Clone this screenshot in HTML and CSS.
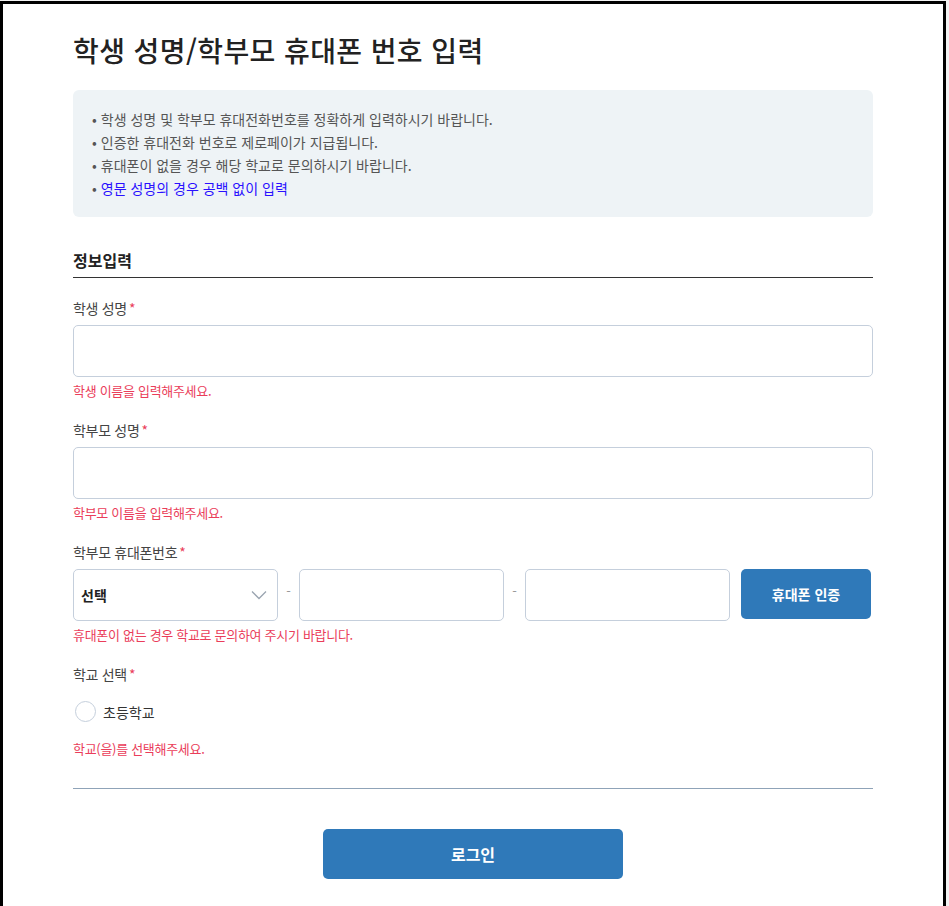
FILE: index.html
```html
<!DOCTYPE html>
<html lang="ko">
<head>
<meta charset="utf-8">
<title>학생 성명/학부모 휴대폰 번호 입력</title>
<link rel="stylesheet" href="styles.css">
</head>
<body>
<div class="frame">
  <div class="content">
    <h1 class="title">학생 성명/학부모 휴대폰 번호 입력</h1>
    <ul class="notice">
      <li>학생 성명 및 학부모 휴대전화번호를 정확하게 입력하시기 바랍니다.</li>
      <li>인증한 휴대전화 번호로 제로페이가 지급됩니다.</li>
      <li>휴대폰이 없을 경우 해당 학교로 문의하시기 바랍니다.</li>
      <li class="blue">영문 성명의 경우 공백 없이 입력</li>
    </ul>
    <h2 class="section">정보입력</h2>

    <div class="field">
      <label class="label">학생 성명<span class="req">*</span></label>
      <input class="input" type="text">
      <p class="error">학생 이름을 입력해주세요.</p>
    </div>

    <div class="field">
      <label class="label">학부모 성명<span class="req">*</span></label>
      <input class="input" type="text">
      <p class="error">학부모 이름을 입력해주세요.</p>
    </div>

    <div class="field">
      <label class="label">학부모 휴대폰번호<span class="req">*</span></label>
      <div class="phone-row">
        <div class="select">
          <span>선택</span>
          <svg width="16" height="10" viewBox="0 0 16 10"><path d="M1 1.5 L8 8.5 L15 1.5" fill="none" stroke="#9aa4b0" stroke-width="1.3"/></svg>
        </div>
        <span class="dash">-</span>
        <input class="input phone" type="text">
        <span class="dash">-</span>
        <input class="input phone" type="text">
        <button class="btn-auth" type="button">휴대폰 인증</button>
      </div>
      <p class="error">휴대폰이 없는 경우 학교로 문의하여 주시기 바랍니다.</p>
    </div>

    <div class="field">
      <label class="label">학교 선택<span class="req">*</span></label>
      <div class="radio-row">
        <span class="radio"></span>
        <span class="radio-text">초등학교</span>
      </div>
      <p class="error school">학교(을)를 선택해주세요.</p>
    </div>

    <hr class="divider">
    <div class="actions">
      <button class="btn-login" type="button">로그인</button>
    </div>
  </div>
</div>
</body>
</html>
```

FILE: styles.css
```css
* { box-sizing: border-box; }
html, body { margin: 0; padding: 0; background: #f2f2f2; }
body {
  font-family: "Noto Sans CJK KR", "Noto Sans", sans-serif;
  color: #333;
  padding-top: 1px;
}
.frame {
  width: 946px;
  height: 905px;
  background: #fff;
  border: 3px solid #000;
  border-bottom: none;
  overflow: hidden;
}
.content {
  width: 800px;
  margin: 0 auto;
  padding-top: 26px;
}
.title {
  margin: 0;
  font-size: 28px;
  font-weight: 500;
  color: #222;
  line-height: 40px;
  letter-spacing: 0.4px;
}
.notice {
  list-style: none;
  margin: 20px 0 0;
  padding: 18px 19px 14px 19px;
  background: #eef3f6;
  border-radius: 6px;
  height: 127px;
}
.notice li {
  font-size: 14px;
  line-height: 23px;
  color: #555;
  letter-spacing: 0;
}
.notice li::before {
  content: "•";
  margin-right: 4px;
  color: #555;
}
.notice li.blue { color: #2a10ff; }
.section {
  margin: 31px 0 0;
  font-size: 16px;
  font-weight: 700;
  color: #222;
  line-height: 24px;
  padding-bottom: 5px;
  border-bottom: 1px solid #333;
}
.field { margin-top: 20px; }
.label {
  display: block;
  font-size: 14px;
  color: #444;
  line-height: 20px;
  letter-spacing: -0.3px;
}
.req { color: #ea3d5a; margin-left: 2px; }
.input {
  display: block;
  width: 100%;
  height: 52px;
  margin-top: 7px;
  border: 1px solid #c5cfdc;
  border-radius: 5px;
  background: #fff;
  font-family: inherit;
  font-size: 14px;
  padding: 0 12px;
}
.error {
  margin: 5px 0 0;
  font-size: 13px;
  line-height: 18px;
  color: #ea3d5a;
  letter-spacing: -0.3px;
}
.phone-row {
  display: flex;
  align-items: flex-start;
  margin-top: 7px;
  height: 52px;
}
.select {
  width: 205px;
  height: 52px;
  border: 1px solid #c5cfdc;
  border-radius: 5px;
  display: flex;
  align-items: center;
  justify-content: space-between;
  padding: 0 10px 0 7px;
  font-size: 14px;
  font-weight: 700;
  color: #222;
}
.dash {
  width: 21px;
  text-align: center;
  color: #999;
  font-size: 13px;
  line-height: 44px;
}
.input.phone {
  width: 205px;
  margin-top: 0;
}
.btn-auth {
  margin-left: 11px;
  width: 130px;
  height: 50px;
  border: none;
  border-radius: 5px;
  background: #2f79b9;
  color: #fff;
  font-family: inherit;
  font-size: 14px;
  font-weight: 700;
}
.radio-row {
  display: flex;
  align-items: center;
  margin-top: 17px;
  padding-left: 2px;
}
.radio {
  width: 21px;
  height: 21px;
  border: 1px solid #c5cfdc;
  border-radius: 50%;
  background: #fff;
}
.radio-text {
  margin-left: 7px;
  font-size: 14px;
  color: #333;
}
.error.school { margin-top: 18px; }
.divider {
  margin: 30px 0 0;
  border: none;
  border-top: 1px solid #8fa3b8;
}
.actions {
  display: flex;
  justify-content: center;
  padding-top: 40px;
}
.btn-login {
  width: 300px;
  height: 50px;
  border: none;
  border-radius: 5px;
  background: #2f79b9;
  color: #fff;
  font-family: inherit;
  font-size: 16px;
  font-weight: 700;
}
```
